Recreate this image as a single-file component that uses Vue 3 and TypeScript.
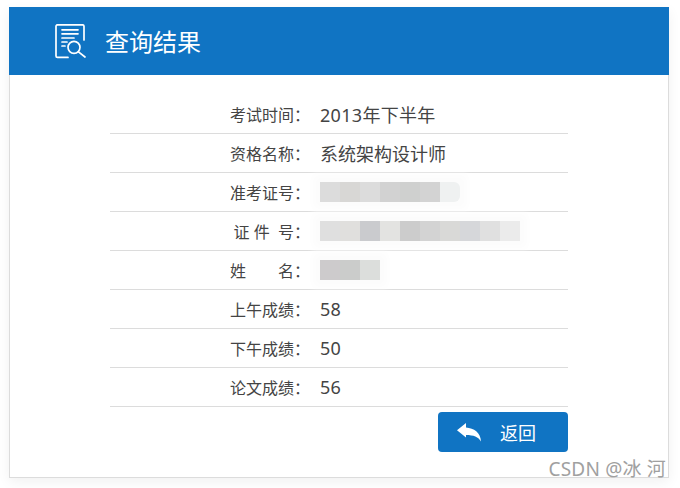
<script setup lang="ts">
interface Row {
  label: string
  value?: string
  cells?: string[]
  soft?: boolean
}
const rows: Row[] = [
  { label: '考试时间：', value: '2013年下半年' },
  { label: '资格名称：', value: '系统架构设计师' },
  { label: '准考证号：', soft: true, cells: ['#dcdcdc', '#d8d7d5', '#dcdcdc', '#d2d2d2', '#cfd0cf', '#d3d3d3', '#eff1f1'] },
  { label: '证 件  号：', cells: ['#dfdfdf', '#e0dfdd', '#cacbce', '#e3e3e1', '#cccccc', '#d3d3d3', '#d9d9d7', '#d6d7da', '#e0e0e0', '#ebebeb'] },
  { label: '姓\u3000\u3000名：', cells: ['#cdcbcc', '#cbcccb', '#dcdedc'] },
  { label: '上午成绩：', value: '58' },
  { label: '下午成绩：', value: '50' },
  { label: '论文成绩：', value: '56' },
]
const isNumeric = (v: string): boolean => /^\d/.test(v)
</script>

<template>
  <div class="page">
    <div class="card">
      <header class="head">
        <svg class="doc" width="32" height="36" viewBox="0 0 32 36" fill="none" stroke="#fff" stroke-width="1.7" stroke-linecap="round" stroke-linejoin="round">
          <path d="M13 33.400H2.500a1.500 1.500 0 0 1-1.500-1.500V2.300a1.500 1.500 0 0 1 1.500-1.500H27.500a1.500 1.500 0 0 1 1.500 1.500V16" />
          <path d="M7 5.800H23M7 9.800H23M7 14H19M7 18H12M7 22H10" />
          <circle cx="19" cy="23.300" r="6" />
          <path d="M23.500 27.800l6.500 5.200" />
        </svg>
        <h1 class="title">查询结果</h1>
      </header>
      <div class="body">
        <div v-for="row in rows" :key="row.label" class="row">
          <span class="label">{{ row.label }}</span>
          <span v-if="row.value" class="value" :class="{ num: isNumeric(row.value) }">{{ row.value }}</span>
          <span v-else class="mask" :class="{ soft: row.soft }">
            <i v-for="(c, i) in row.cells" :key="i" class="cell" :style="{ background: c }"></i>
          </span>
        </div>
        <div class="actions">
          <button class="back" type="button">
            <svg width="26" height="20" viewBox="0 0 26 20"><path fill="#fff" d="M0 8.300 9 1v4.600c8 .5 14.500 5 15 14-2.500-4.500-7.500-6.500-15-6.500V15.500z" /></svg>
            <span>返回</span>
          </button>
        </div>
      </div>
      <span class="mark">CSDN @冰 河</span>
    </div>
  </div>
</template>

<style scoped>
.page {
  width: 680px;
  height: 488px;
  padding: 7px 0 0 9px;
  box-sizing: border-box;
  background: #fff;
  font-family: "Noto Sans", "Noto Sans CJK SC", sans-serif;
  overflow: hidden;
}
.card {
  position: relative;
  width: 660px;
  height: 471px;
  box-sizing: border-box;
  background: #fff;
  border: 1px solid #dcdcdc;
  border-top: 0;
  box-shadow: 0 4px 12px rgba(0, 0, 0, 0.06);
}
.head {
  display: flex;
  align-items: center;
  height: 68px;
  margin: 0 -1px;
  padding-left: 46px;
  background: #1074c3;
  color: #fff;
}
.doc {
  margin-top: 1px;
}
.title {
  margin: 2px 0 0 18px;
  font-size: 24px;
  font-weight: 400;
  line-height: 34px;
}
.body {
  width: 458px;
  margin-left: 100px;
  padding-top: 20px;
}
.row {
  display: flex;
  align-items: center;
  gap: 10px;
  height: 38px;
  border-bottom: 1px solid #dcdcdc;
  color: #444;
}
.label {
  flex: none;
  width: 200px;
  font-size: 16px;
  text-align: right;
  white-space: pre;
}
.value {
  font-size: 18px;
}
.value.num {
  letter-spacing: 0.3px;
}
.mask {
  display: flex;
  box-shadow: 0 0 8px 7px #fcfcfc;
  background: #fcfcfc;
}
.cell {
  display: block;
  width: 20px;
  height: 20px;
}
.mask.soft .cell:last-child {
  border-radius: 0 6px 6px 0;
}
.actions {
  display: flex;
  justify-content: flex-end;
  padding-top: 5px;
}
.back {
  display: flex;
  align-items: center;
  gap: 17px;
  width: 130px;
  height: 40px;
  padding: 0 0 0 19px;
  border: 0;
  border-radius: 4px;
  background: #1074c3;
  color: #fff;
  font-family: inherit;
  font-size: 18px;
}
.mark {
  position: absolute;
  right: 2px;
  bottom: -5px;
  color: #969696;
  font-size: 19px;
  line-height: 26px;
  letter-spacing: 0.2px;
  opacity: 0.9;
}
</style>
